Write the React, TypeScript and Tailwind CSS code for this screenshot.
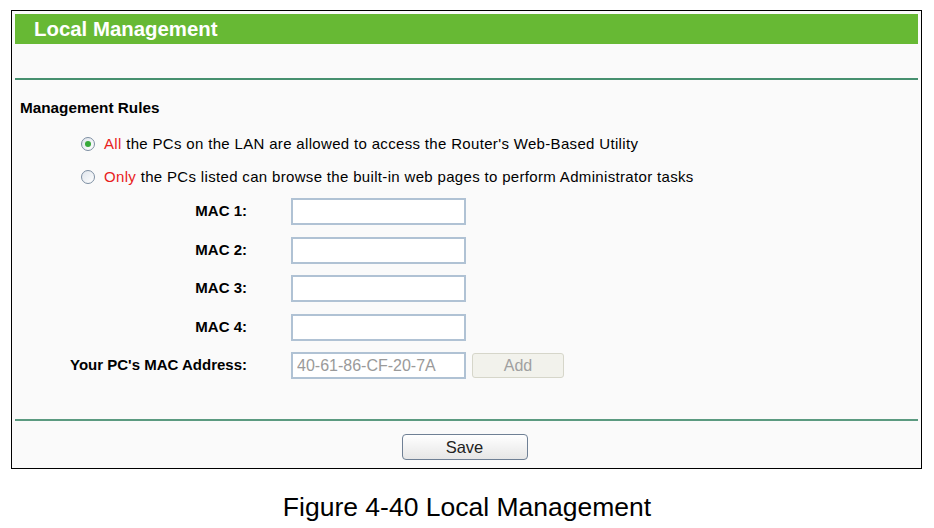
import React from "react";

const FONT = { fontFamily: '"Liberation Sans", Arial, sans-serif' };

function Radio({ checked }: { checked?: boolean }) {
  return (
    <span className="flex h-[14px] w-[14px] shrink-0 items-center justify-center rounded-full border border-[#7d8ea2] bg-gradient-to-br from-[#dfe5ec] to-white">
      {checked && <span className="h-[6px] w-[6px] rounded-full bg-[#37a93a]" />}
    </span>
  );
}

function MacRow({ label, value, disabled, children }: { label: string; value?: string; disabled?: boolean; children?: React.ReactNode }) {
  return (
    <div className="flex h-[27px] items-center">
      <div className="w-[232px] text-right text-[15px] font-bold text-black">{label}</div>
      <input
        readOnly
        value={value ?? ""}
        disabled={disabled}
        className="ml-[44px] h-[27px] w-[175px] border-2 border-[#b0c2d4] bg-white px-[4px] text-[16px] text-[#9a9a9a] outline-none"
        style={FONT}
      />
      {children}
    </div>
  );
}

export default function App() {
  return (
    <div className="h-[528px] w-[934px] overflow-hidden bg-white pt-[10px]" style={FONT}>
      <div className="ml-[11px] flex h-[459px] w-[911px] flex-col border border-black bg-[#fafafa] p-[3px]">
        <div className="flex h-[30px] items-center bg-[#67b934] pl-[19px] text-[20.4px] font-bold text-white">
          Local Management
        </div>
        <div className="h-[34px]" />
        <div className="h-[2px] bg-[#46906f]" />

        <div className="mt-[17px] h-[22px] pl-[5px] text-[15.3px] font-bold leading-[22px] text-black">
          Management Rules
        </div>

        <div className="mt-[14px] flex h-[22px] items-center pl-[66px] text-[15px] tracking-[0.33px] text-black">
          <Radio checked />
          <span className="ml-[9px]">
            <span className="text-[#e8211c]">All</span> the PCs on the LAN are allowed to access the Router's Web-Based Utility
          </span>
        </div>
        <div className="mt-[11px] flex h-[22px] items-center pl-[66px] text-[15px] tracking-[0.33px] text-black">
          <Radio />
          <span className="ml-[9px]">
            <span className="text-[#e8211c]">Only</span> the PCs listed can browse the built-in web pages to perform Administrator tasks
          </span>
        </div>

        <div className="mt-[10px] flex flex-col gap-[11.5px]">
          <MacRow label="MAC 1:" />
          <MacRow label="MAC 2:" />
          <MacRow label="MAC 3:" />
          <MacRow label="MAC 4:" />
          <MacRow label="Your PC's MAC Address:" value="40-61-86-CF-20-7A" disabled>
            <button
              type="button"
              disabled
              className="ml-[6px] h-[25px] w-[92px] rounded-[3px] border border-[#d6d6ca] bg-[#f2f2ec] text-[16px] text-[#a0a0a0]"
            >
              Add
            </button>
          </MacRow>
        </div>

        <div className="mt-[40px] h-[2px] bg-[#5b9a80]" />
        <div className="mt-[13px] flex justify-center">
          <button
            type="button"
            className="ml-[-4px] h-[26px] w-[126px] rounded-[4px] border border-[#6f8095] bg-gradient-to-b from-white to-[#e6e6e6] text-[16.5px] text-[#222]"
          >
            Save
          </button>
        </div>
      </div>
      <div className="mt-[23px] text-center text-[26.5px] leading-[30px] text-black">Figure 4-40 Local Management</div>
    </div>
  );
}
